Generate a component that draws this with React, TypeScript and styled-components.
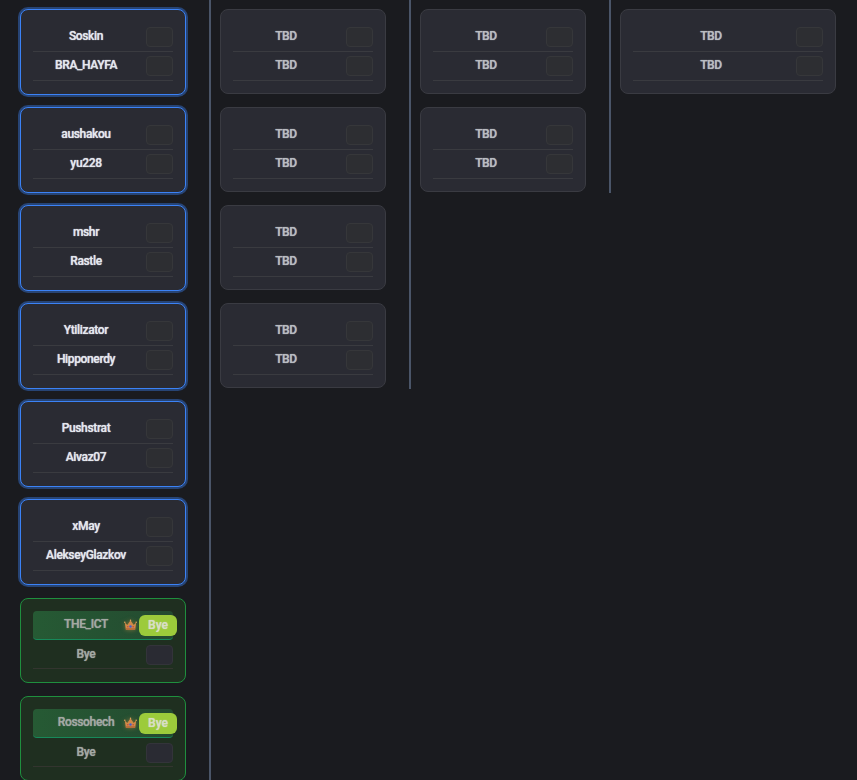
import React from "react";
import styled, { createGlobalStyle } from "styled-components";

const Global = createGlobalStyle`
  html, body { margin: 0; padding: 0; background: #1a1b1f; }
  body { width: 857px; height: 780px; overflow: hidden; font-family: Roboto, "Liberation Sans", sans-serif; }
`;

const Bracket = styled.div`
  display: flex;
  align-items: flex-start;
  height: 780px;
  overflow: hidden;
  padding-left: 20px;
  background: #1a1b1f;
`;

const Round = styled.div<{ $last?: boolean; $tall?: boolean }>`
  display: flex;
  flex-direction: column;
  flex: none;
  padding: 9px ${(p) => (p.$last ? "0" : "23px")} 1px 0;
  margin-right: 9px;
  border-right: ${(p) => (p.$last ? "0" : "2px solid #4a5568")};
  min-height: ${(p) => (p.$tall ? "780px" : "auto")};
  box-sizing: border-box;
`;

type Tone = "plain" | "active" | "won";

const Card = styled.div<{ $tone: Tone; $wide?: boolean }>`
  box-sizing: border-box;
  flex: none;
  width: ${(p) => (p.$wide ? "216px" : "166px")};
  height: ${(p) => (p.$tone === "active" ? "86px" : "85px")};
  margin-top: ${(p) => (p.$tone === "won" ? "1px" : "0")};
  margin-bottom: ${(p) => (p.$tone === "plain" ? "13px" : "12px")};
  padding: ${(p) => (p.$tone === "won" ? "12px" : "13px")} 12px 0;
  border-radius: 8px;
  border: 1px solid
    ${(p) => (p.$tone === "active" ? "#3b82f6" : p.$tone === "won" ? "#1f8f3e" : "#3a3b42")};
  background: ${(p) => (p.$tone === "won" ? "#1f2f20" : "#2a2b33")};
  box-shadow: ${(p) => (p.$tone === "active" ? "0 0 0 2px rgba(59,130,246,0.4)" : "none")};
  &:last-child {
    margin-bottom: 0;
  }
`;

const Row = styled.div<{ $winner?: boolean; $tone?: Tone }>`
  position: relative;
  display: flex;
  align-items: center;
  gap: 7px;
  box-sizing: border-box;
  height: 29px;
  border-bottom: 1px solid
    ${(p) => (p.$winner ? "#17895a" : p.$tone === "won" ? "#33352f" : "#3a3b40")};
  border-radius: ${(p) => (p.$winner ? "4px" : "0")};
  background: ${(p) =>
    p.$winner ? "linear-gradient(90deg, #265a34, #244a30)" : "transparent"};
`;

const Name = styled.span<{ $tone: Tone; $tbd?: boolean; $winner?: boolean }>`
  flex: 1;
  min-width: 0;
  text-align: center;
  font-size: 12px;
  font-weight: 500;
  line-height: 14px;
  letter-spacing: -0.35px;
  white-space: nowrap;
  text-shadow: 0 0 1px currentColor;
  margin-top: ${(p) => (p.$winner ? "-3px" : "0")};
  margin-bottom: ${(p) => (p.$tone === "won" ? "0" : "2px")};
  padding-right: ${(p) => (p.$winner ? "34px" : "0")};
  color: ${(p) =>
    p.$tone === "won" ? "#a3a8a3" : p.$tbd ? "#b9bcc2" : "#e4e7ee"};
`;

const ScoreBox = styled.div<{ $tone: Tone }>`
  flex: none;
  box-sizing: border-box;
  width: 27px;
  height: 20px;
  margin-top: ${(p) => (p.$tone === "won" ? "2px" : "0")};
  border-radius: 4px;
  border: 1px solid ${(p) => (p.$tone === "won" ? "#33343a" : "#36373a")};
  background: ${(p) => (p.$tone === "won" ? "#2a2b33" : "#2d2e32")};
`;

const Crown = styled.svg`
  position: absolute;
  left: 91px;
  top: 7px;
  width: 13px;
  height: 14px;
  filter: blur(0.3px) drop-shadow(0 0 2px rgba(230, 150, 70, 0.5));
`;

const ByeBadge = styled.span`
  position: absolute;
  left: 106px;
  top: 4px;
  box-sizing: border-box;
  width: 38px;
  height: 21px;
  border-radius: 6px;
  background: #9ccb3b;
  color: #d8dec6;
  font-size: 12px;
  font-weight: 500;
  line-height: 21px;
  text-align: center;
  text-shadow: 0 0 1px currentColor;
`;

function CrownIcon() {
  return (
    <Crown viewBox="0 0 14 14">
      <path d="M0.8 4.2 L3.6 7 L7 1.8 L10.4 7 L13.2 4.2 L12 12 H2 Z" fill="#d18a48" />
      <rect x="2" y="10.4" width="10" height="1.8" fill="#b56c3a" />
      <circle cx="7" cy="8.6" r="1.3" fill="#4560c8" />
      <circle cx="4.1" cy="8.9" r="0.8" fill="#c2453f" />
      <circle cx="9.9" cy="8.9" r="0.8" fill="#c2453f" />
      <circle cx="7" cy="1.8" r="0.8" fill="#e8a95e" />
      <circle cx="0.9" cy="4" r="0.8" fill="#e8a95e" />
      <circle cx="13.1" cy="4" r="0.8" fill="#e8a95e" />
    </Crown>
  );
}

function Match({ a, b, tone, wide, tbd }: { a: string; b: string; tone: Tone; wide?: boolean; tbd?: boolean }) {
  const won = tone === "won";
  return (
    <Card $tone={tone} $wide={wide}>
      <Row $winner={won} $tone={tone}>
        <Name $tone={tone} $tbd={tbd} $winner={won}>{a}</Name>
        {won ? (
          <>
            <CrownIcon />
            <ByeBadge>Bye</ByeBadge>
          </>
        ) : (
          <ScoreBox $tone={tone} />
        )}
      </Row>
      <Row $tone={tone}>
        <Name $tone={tone} $tbd={tbd}>{b}</Name>
        <ScoreBox $tone={tone} />
      </Row>
    </Card>
  );
}

const first: [string, string][] = [
  ["Soskin", "BRA_HAYFA"],
  ["aushakou", "yu228"],
  ["mshr", "Rastle"],
  ["Ytilizator", "Hipponerdy"],
  ["Pushstrat", "Aivaz07"],
  ["xMay", "AlekseyGlazkov"],
];

export default function App() {
  return (
    <>
      <Global />
      <Bracket>
        <Round $tall>
          {first.map(([a, b]) => (
            <Match key={a} a={a} b={b} tone="active" />
          ))}
          <Match a="THE_ICT" b="Bye" tone="won" />
          <Match a="Rossohech" b="Bye" tone="won" />
        </Round>
        <Round>
          {[0, 1, 2, 3].map((i) => (
            <Match key={i} a="TBD" b="TBD" tone="plain" tbd />
          ))}
        </Round>
        <Round>
          {[0, 1].map((i) => (
            <Match key={i} a="TBD" b="TBD" tone="plain" tbd />
          ))}
        </Round>
        <Round $last>
          <Match a="TBD" b="TBD" tone="plain" tbd wide />
        </Round>
      </Bracket>
    </>
  );
}
